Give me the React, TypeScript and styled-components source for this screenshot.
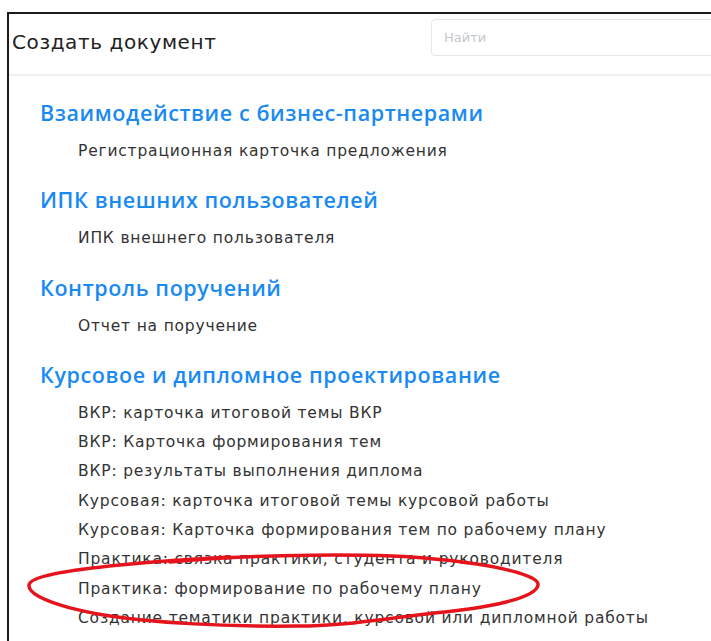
import styled, { createGlobalStyle } from 'styled-components';

const GlobalStyle = createGlobalStyle`
  html, body {
    margin: 0;
    padding: 0;
    background: #ffffff;
  }
  body {
    font-family: 'DejaVu Sans', 'Noto Sans', Arial, sans-serif;
    color: #333;
  }
`;

const Frame = styled.div`
  margin: 12px 0 0 7px;
  height: calc(100vh - 12px);
  border-top: 2px solid #1b1b1b;
  border-left: 2px solid #1b1b1b;
  box-sizing: border-box;
  overflow: hidden;
`;

const Header = styled.div`
  display: grid;
  grid-template-columns: 422px 1fr;
  height: 60px;
  border-bottom: 2px solid #eef0f3;
`;

const Title = styled.div`
  padding: 14px 0 0 3px;
  font-size: 20px;
  line-height: 28px;
  letter-spacing: 0.6px;
  color: #222;
`;

const Search = styled.input`
  margin-top: 5px;
  width: calc(100% + 20px);
  height: 37px;
  box-sizing: border-box;
  border: 1px solid #e3e6ea;
  border-radius: 4px;
  padding: 0 12px;
  font-family: inherit;
  font-size: 13px;
  outline: none;

  &::placeholder {
    color: #c3c8ce;
  }
`;

const Content = styled.div`
  position: relative;
  padding: 22px 0 0 31px;
`;

const Section = styled.section`
  margin-bottom: 19px;
`;

const Heading = styled.h2`
  margin: 0 0 9px;
  font-family: 'Open Sans', 'Noto Sans', sans-serif;
  font-size: 21.5px;
  line-height: 30px;
  font-weight: 600;
  letter-spacing: 0.6px;
  color: #1a8af2;
`;

const Items = styled.ul`
  list-style: none;
  margin: 0;
  padding: 0 0 0 38px;
`;

const Item = styled.li`
  font-size: 15.5px;
  line-height: 29.3px;
  letter-spacing: 0.8px;
  color: #333;
  white-space: nowrap;
`;

const Marker = styled.svg`
  position: absolute;
  left: 11px;
  top: 472px;
  pointer-events: none;
`;

const groups: { title: string; items: string[] }[] = [
  {
    title: 'Взаимодействие с бизнес-партнерами',
    items: ['Регистрационная карточка предложения'],
  },
  {
    title: 'ИПК внешних пользователей',
    items: ['ИПК внешнего пользователя'],
  },
  {
    title: 'Контроль поручений',
    items: ['Отчет на поручение'],
  },
  {
    title: 'Курсовое и дипломное проектирование',
    items: [
      'ВКР: карточка итоговой темы ВКР',
      'ВКР: Карточка формирования тем',
      'ВКР: результаты выполнения диплома',
      'Курсовая: карточка итоговой темы курсовой работы',
      'Курсовая: Карточка формирования тем по рабочему плану',
      'Практика: связка практики, студента и руководителя',
      'Практика: формирование по рабочему плану',
      'Создание тематики практики, курсовой или дипломной работы',
    ],
  },
];

export default function App() {
  return (
    <>
      <GlobalStyle />
      <Frame>
        <Header>
          <Title>Создать документ</Title>
          <Search placeholder="Найти" />
        </Header>
        <Content>
          {groups.map((g) => (
            <Section key={g.title}>
              <Heading>{g.title}</Heading>
              <Items>
                {g.items.map((it) => (
                  <Item key={it}>{it}</Item>
                ))}
              </Items>
            </Section>
          ))}
          {/* hand-drawn highlight ring */}
          <Marker width="540" height="90" viewBox="0 0 540 90">
            <path
              d="M150 14 C 230 6, 360 5, 414 11 C 480 17, 520 28, 518 37 C 516 50, 470 60, 414 65 C 360 72, 320 78, 276 78 C 200 79, 130 74, 90 68 C 40 60, 8 48, 9 37 C 10 28, 50 22, 100 17 C 130 14, 170 11, 210 9"
              fill="none"
              stroke="#e5141c"
              strokeWidth="3.5"
              strokeLinecap="round"
            />
          </Marker>
        </Content>
      </Frame>
    </>
  );
}
